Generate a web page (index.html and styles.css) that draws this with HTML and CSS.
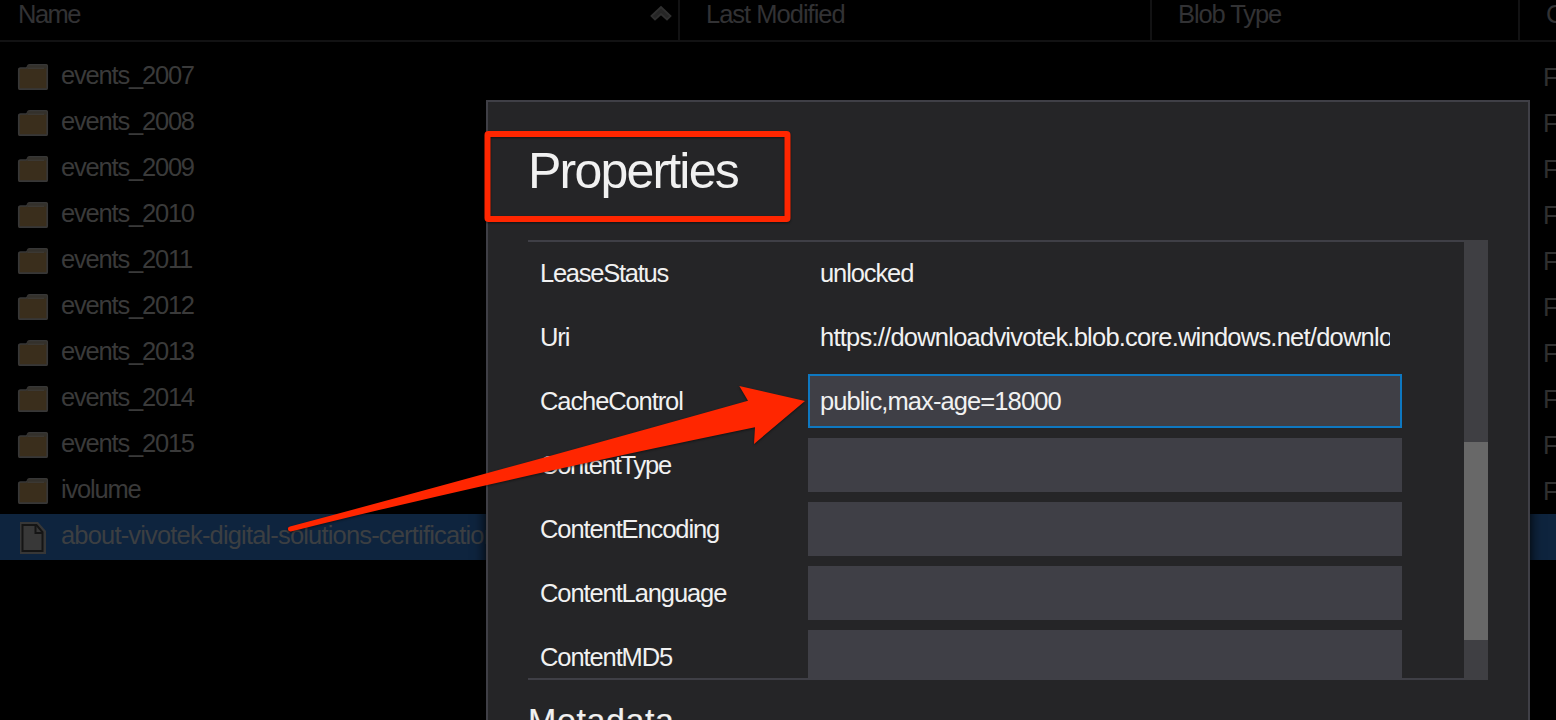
FILE: index.html
```html
<!DOCTYPE html>
<html lang="en">
<head>
<meta charset="utf-8">
<title>Blob Properties</title>
<link rel="stylesheet" href="styles.css">
</head>
<body>
<svg class="defs" width="0" height="0">
  <symbol id="folder" viewBox="0 0 32 28">
    <path d="M1 25V7Q1 5 3 5H9Q10 5 10.500 3.500Q11 1 13 1H29Q31 1 31 3V25Q31 27 29 27H3Q1 27 1 25Z" fill="#3a2e1c"/>
    <path d="M1.800 24.500V7Q1.800 5 3.500 5H9Q10 5 10.500 3.500Q11 1.800 13 1.800H28.500Q30.200 1.800 30.200 3.500V24.500Q30.200 26.200 28.500 26.200H3.500Q1.800 26.200 1.800 24.500Z" fill="none" stroke="#373737" stroke-width="1.700"/>
    <path d="M10.500 2.500H29.500V5.500H10Z" fill="#33302b"/>
    <path d="M10.500 5.300H27" fill="none" stroke="#3b3833" stroke-width="1.500"/>
  </symbol>
  <symbol id="file" viewBox="0 0 28 32">
    <path d="M1 0H19L27 9V32H1Z" fill="#373737"/>
    <path d="M3.500 3H17.500L23.500 10V29H3.500Z" fill="#383838" stroke="#151515" stroke-width="2"/>
    <path d="M16.500 3V11H24" fill="none" stroke="#151515" stroke-width="2"/>
  </symbol>
</svg>
<main class="explorer">
  <header class="columns">
    <div class="column"><span>Name</span>
      <svg class="sort" width="22" height="18" viewBox="0 0 22 18"><path d="M1.500 11L11 2L20.500 11L17 14.500L11 9L5 14.500Z" fill="#262626" stroke="#303030" stroke-width="1.800"/></svg>
    </div>
    <div class="column"><span class="modified">Last Modified</span></div>
    <div class="column"><span>Blob Type</span></div>
    <div class="column"><span>C</span></div>
  </header>
  <div class="rows">
    <div class="row"><svg class="icon"><use href="#folder"/></svg><span class="name">events_2007</span><span class="kind">F</span></div>
    <div class="row"><svg class="icon"><use href="#folder"/></svg><span class="name">events_2008</span><span class="kind">F</span></div>
    <div class="row"><svg class="icon"><use href="#folder"/></svg><span class="name">events_2009</span><span class="kind">F</span></div>
    <div class="row"><svg class="icon"><use href="#folder"/></svg><span class="name">events_2010</span><span class="kind">F</span></div>
    <div class="row"><svg class="icon"><use href="#folder"/></svg><span class="name">events_2011</span><span class="kind">F</span></div>
    <div class="row"><svg class="icon"><use href="#folder"/></svg><span class="name">events_2012</span><span class="kind">F</span></div>
    <div class="row"><svg class="icon"><use href="#folder"/></svg><span class="name">events_2013</span><span class="kind">F</span></div>
    <div class="row"><svg class="icon"><use href="#folder"/></svg><span class="name">events_2014</span><span class="kind">F</span></div>
    <div class="row"><svg class="icon"><use href="#folder"/></svg><span class="name">events_2015</span><span class="kind">F</span></div>
    <div class="row"><svg class="icon"><use href="#folder"/></svg><span class="name">ivolume</span><span class="kind">F</span></div>
    <div class="row selected"><svg class="icon file"><use href="#file"/></svg><span class="name">about-vivotek-digital-solutions-certification</span></div>
  </div>

  <section class="dialog">
    <h1 class="title">Properties</h1>
    <div class="panel">
      <div class="fields">
        <div class="field"><span class="label lease">LeaseStatus</span><span class="value">unlocked</span></div>
        <div class="field"><span class="label">Uri</span><span class="value uri">https://downloadvivotek.blob.core.windows.net/downlo</span></div>
        <div class="field"><span class="label">CacheControl</span><span class="value box focused">public,max-age=18000</span></div>
        <div class="field"><span class="label content-type">ContentType</span><span class="value box"></span></div>
        <div class="field"><span class="label">ContentEncoding</span><span class="value box"></span></div>
        <div class="field"><span class="label">ContentLanguage</span><span class="value box"></span></div>
        <div class="field"><span class="label">ContentMD5</span><span class="value box"></span></div>
      </div>
      <div class="scrollbar"><div class="thumb"></div></div>
    </div>
    <h2 class="subtitle">Metadata</h2>
  </section>

  <svg class="annotations" width="1556" height="720" viewBox="0 0 1556 720">
    <rect x="487.500" y="134" width="300" height="85" rx="1" fill="none" stroke="#ff2600" stroke-width="6" stroke-linejoin="round"/>
    <path d="M290 526.500Q480 476 748 400.700L739.300 386L805 400.900L754 444L755 427.300Q480 484 291 531.500A2.500 2.500 0 0 1 290 526.500Z" fill="#ff2600"/>
  </svg>
</main>
</body>
</html>
```

FILE: styles.css
```css
* { box-sizing: border-box; }

body {
  margin: 0;
  background: #000;
  font-family: "Liberation Sans", Arial, sans-serif;
  font-size: 25.5px;
  letter-spacing: -1.1px;
  white-space: nowrap;
}

.defs { position: absolute; }

.explorer {
  position: relative;
  width: 1556px;
  height: 720px;
  overflow: hidden;
}

.columns {
  display: grid;
  grid-template-columns: 680px 472px 368px 36px;
  height: 42px;
  color: #323234;
}

.column {
  display: flex;
  justify-content: space-between;
  padding: 0 6px 0 26px;
  border-right: 2px solid #121213;
  border-bottom: 2px solid #121213;
  line-height: 28px;
  overflow: hidden;
}

.column:first-child { padding-left: 18px; letter-spacing: -1.5px; }
.column:last-child { border-right: 0; padding-right: 0; }
.modified { letter-spacing: -1px; }
.sort { margin-top: 5px; }

.rows { padding-top: 12px; }

.row {
  display: flex;
  align-items: center;
  height: 46px;
  padding-left: 17px;
  color: #3a3a3a;
}

.icon { width: 32px; height: 28px; margin-right: 12px; flex: none; }
.icon.file { width: 28px; height: 32px; margin: 2px 14px 0 2px; }
.name { flex: 1; height: 46px; line-height: 43px; letter-spacing: -1.2px; }
.kind { width: 13px; height: 46px; line-height: 47px; color: #303030; overflow: hidden; }
.selected { background: #0e243e; color: #3c3f42; }
.selected .name { letter-spacing: -0.83px; }

.dialog {
  position: absolute;
  left: 486px;
  top: 100px;
  width: 1044px;
  height: 640px;
  padding: 38px 40px 0;
  background: #252527;
  border: 2px solid #3f3f46;
  box-shadow: 0 0 12px #000;
  color: #f1f1f1;
}

.title {
  height: 100px;
  margin: 0;
  font-size: 50px;
  font-weight: 400;
  line-height: 62px;
  letter-spacing: -1.8px;
}

.panel {
  display: flex;
  height: 440px;
}

.fields {
  flex: 1;
  display: flex;
  flex-direction: column;
  gap: 10px;
  padding: 4px 62px 0 12px;
  border-top: 2px solid #3f3f46;
  border-bottom: 2px solid #3f3f46;
  overflow: hidden;
}

.field {
  display: grid;
  grid-template-columns: 268px 594px;
  flex: none;
  height: 54px;
  line-height: 54px;
}

.lease, .content-type { letter-spacing: -1.25px; }
.value { margin: 0 12px; overflow: hidden; }
.uri { letter-spacing: -0.77px; }
.box { margin: 0; padding-left: 12px; background: #3f3f46; }
.focused {
  padding-left: 10px;
  border: 2px solid #0e78c1;
  line-height: 50px;
  letter-spacing: -0.9px;
}

.scrollbar { width: 24px; padding-top: 202px; background: #3f3f43; }
.thumb { height: 198px; background: #686868; }

.subtitle {
  margin: 16px 0 0;
  font-size: 34px;
  font-weight: 400;
  line-height: 48px;
  letter-spacing: 0.6px;
  -webkit-text-stroke: 0.2px #f1f1f1;
}

.annotations {
  position: absolute;
  inset: 0;
  filter: drop-shadow(0 1px 1px rgba(0, 0, 0, .5));
}
```
